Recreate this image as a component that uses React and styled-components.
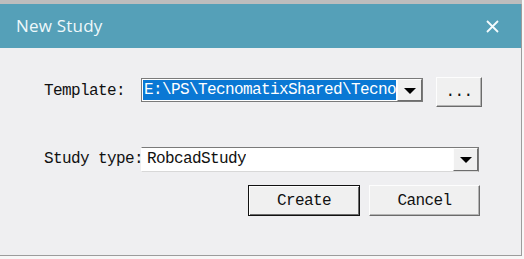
import React from 'react';
import styled, { createGlobalStyle } from 'styled-components';

const GlobalStyle = createGlobalStyle`
    html, body {
        margin: 0;
        padding: 0;
        background: #f7f7f7;
    }
`;

const MONO = `'Liberation Mono', 'DejaVu Sans Mono', monospace`;

const Window = styled.div`
    margin-top: 4px;
    width: 522px;
    height: 252px;
    background: #efeff1;
    border-right: 1px solid #9c9c9c;
    border-bottom: 1px solid #9c9c9c;
    box-sizing: border-box;
    display: flex;
    flex-direction: column;
    box-shadow: 0 -4px 0 #bdbdbd;
`;

const TitleBar = styled.div`
    height: 44px;
    flex: none;
    background: #55a0b8;
    display: flex;
    align-items: center;
    justify-content: space-between;
    padding: 0 22px 0 16px;
`;

const Title = styled.span`
    font-family: 'Open Sans', 'Noto Sans', sans-serif;
    font-size: 17px;
    letter-spacing: 0.2px;
    color: #eef8fb;
    margin-top: -2px;
`;

const Content = styled.div`
    padding: 29px 41px 0 44px;
    display: flex;
    flex-direction: column;
    font-family: ${MONO};
    font-size: 16px;
    letter-spacing: -0.6px;
    color: #111;
`;

const Row = styled.div`
    display: flex;
    align-items: flex-start;
    margin-top: ${(p) => p.$top || 0}px;
`;

const Label = styled.span`
    width: 97px;
    flex: none;
    white-space: nowrap;
    line-height: ${(p) => p.$line}px;
`;

const Combo = styled.div`
    width: ${(p) => p.$width}px;
    height: ${(p) => p.$height}px;
    margin-top: ${(p) => p.$top || 0}px;
    box-sizing: border-box;
    display: flex;
    background: #fff;
    border: 1px solid #7a7a7a;
    border-left-color: ${(p) => (p.$open ? 'transparent' : '#7a7a7a')};
    border-bottom-color: ${(p) => (p.$open ? '#d8d8d8' : '#7a7a7a')};
    flex: none;
`;

const Field = styled.div`
    flex: 1;
    overflow: hidden;
    white-space: nowrap;
    display: flex;
    align-items: center;
    padding: 1px;
    min-width: 0;
`;

const FieldText = styled.span`
    display: block;
    height: 100%;
    line-height: ${(p) => p.$line}px;
    padding-left: 1px;
    margin-left: ${(p) => p.$shift || 0}px;
    background: ${(p) => (p.$selected ? '#0a78d4' : 'transparent')};
    color: ${(p) => (p.$selected ? '#fff' : '#111')};
    flex: ${(p) => (p.$selected ? 1 : 'none')};
    overflow: hidden;
`;

const DropButton = styled.div`
    width: 25px;
    flex: none;
    box-sizing: border-box;
    background: #f0f0f0;
    border-top: 1px solid #fdfdfd;
    border-left: 1px solid #fdfdfd;
    border-right: 1px solid #6d6d6d;
    border-bottom: 1px solid #6d6d6d;
    display: flex;
    align-items: center;
    justify-content: center;
`;

const Arrow = styled.span`
    width: 0;
    height: 0;
    border-left: 6px solid transparent;
    border-right: 6px solid transparent;
    border-top: 6px solid #000;
    margin-top: 1px;
`;

const Button = styled.button`
    width: ${(p) => p.$width}px;
    height: ${(p) => p.$height}px;
    margin-left: ${(p) => p.$left || 0}px;
    box-sizing: border-box;
    flex: none;
    padding: 0;
    font-family: ${MONO};
    font-size: 16px;
    letter-spacing: -0.6px;
    color: #111;
    background: #f0f0f0;
    border: 1px solid ${(p) => (p.$default ? '#111' : '#fdfdfd')};
    border-right-color: ${(p) => (p.$default ? '#111' : '#6b6b6b')};
    border-bottom-color: ${(p) => (p.$default ? '#111' : '#6b6b6b')};
    box-shadow: ${(p) =>
        p.$default
            ? 'inset 1px 1px 0 #fdfdfd, inset -1px -1px 0 #6b6b6b'
            : 'inset -1px -1px 0 #b4b4b4'};
`;

const Buttons = styled.div`
    display: flex;
    justify-content: flex-end;
    margin-top: 13px;
    gap: 9px;
`;

const CloseIcon = () => (
    <svg width="13" height="13" viewBox="0 0 13 13">
        <path d="M1 1L12 12M12 1L1 12" stroke="#f4fbfd" strokeWidth="1.8" />
    </svg>
);

const App = () => (
    <>
        <GlobalStyle />
        <Window>
            <TitleBar>
                <Title>New Study</Title>
                <CloseIcon />
            </TitleBar>
            <Content>
                <Row>
                    <Label $line={28}>Template:</Label>
                    <Combo $width={282} $height={24} $top={1}>
                        <Field>
                            <FieldText $selected $line={20}>
                                E:\PS\TecnomatixShared\Tecno
                            </FieldText>
                        </Field>
                        <DropButton>
                            <Arrow />
                        </DropButton>
                    </Combo>
                    <Button $width={46} $height={30} $left={13}>
                        ...
                    </Button>
                </Row>
                <Row $top={40}>
                    <Label $line={25}>Study type:</Label>
                    <Combo $width={338} $height={25} $open>
                        <Field>
                            <FieldText $line={21} $shift={3}>
                                RobcadStudy
                            </FieldText>
                        </Field>
                        <DropButton>
                            <Arrow />
                        </DropButton>
                    </Combo>
                </Row>
                <Buttons>
                    <Button $width={112} $height={31} $default>
                        Create
                    </Button>
                    <Button $width={111} $height={31}>
                        Cancel
                    </Button>
                </Buttons>
            </Content>
        </Window>
    </>
);

export default App;
